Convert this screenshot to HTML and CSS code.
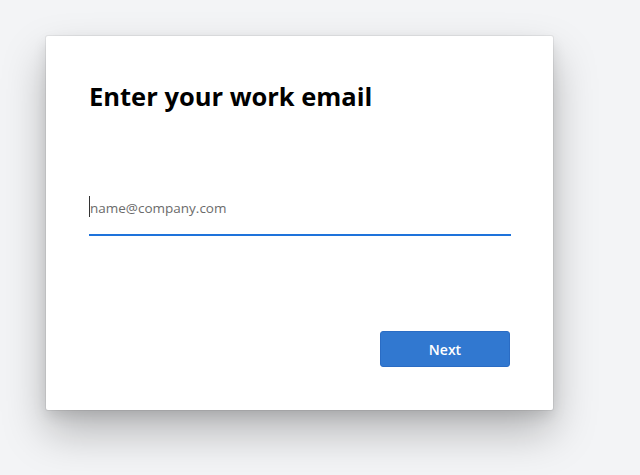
FILE: index.html
```html
<!DOCTYPE html>
<html>
<head>
<meta charset="utf-8">
<link rel="stylesheet" href="styles.css">
</head>
<body>
<div class="page">
  <div class="card">
    <h1 class="title">Enter your work email</h1>
    <div class="field">
      <span class="caret"></span>
      <input class="input" type="text" placeholder="name@company.com">
    </div>
    <div class="actions">
      <button class="btn">Next</button>
    </div>
  </div>
</div>
</body>
</html>
```

FILE: styles.css
```css
html, body {
  margin: 0;
  padding: 0;
  background: #f3f4f6;
  font-family: "Open Sans", "Noto Sans", sans-serif;
}
.page {
  width: 640px;
  height: 475px;
  padding: 36px 0 0 46px;
  box-sizing: border-box;
}
.card {
  width: 507px;
  height: 374px;
  box-sizing: border-box;
  background: #fff;
  border-radius: 2px;
  box-shadow: 0 0 0 1px rgba(0,0,0,0.06), 0 22px 44px rgba(0,0,0,0.26), 0 6px 14px rgba(0,0,0,0.1);
  padding: 43px 42px 43px 43px;
  display: flex;
  flex-direction: column;
}
.title {
  margin: 0;
  font-size: 25.5px;
  font-weight: 700;
  line-height: 34px;
  color: #000;
}
.field {
  position: relative;
  margin-top: 76px;
  border-bottom: 2px solid #1e73db;
  height: 45px;
}
.caret {
  position: absolute;
  left: 0;
  top: 7px;
  width: 1px;
  height: 21px;
  background: #333;
}
.input {
  border: 0;
  outline: 0;
  padding: 0 0 0 1px;
  margin: 0;
  width: 100%;
  height: 38px;
  font-family: "Open Sans", "Noto Sans", sans-serif;
  font-size: 13.5px;
  color: #222;
  background: transparent;
  display: block;
}
.input::placeholder {
  color: #6b6b6b;
}
.actions {
  margin-top: auto;
  display: flex;
  justify-content: flex-end;
  padding-right: 1px;
}
.btn {
  width: 130px;
  height: 36px;
  border: 1px solid #2a6cc4;
  border-radius: 3px;
  background: #3178d0;
  color: #fff;
  font-family: "Open Sans", "Noto Sans", sans-serif;
  font-size: 14px;
  font-weight: 600;
  cursor: pointer;
}
```
